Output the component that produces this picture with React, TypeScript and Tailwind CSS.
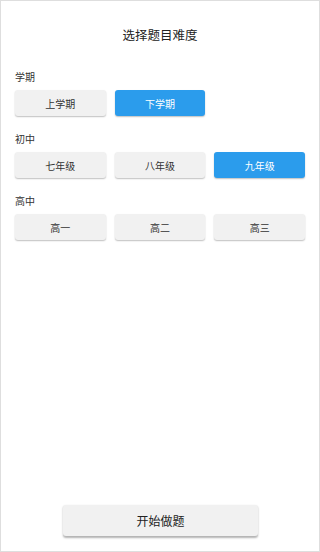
import { useState } from "react"

const font = { fontFamily: '"Noto Sans CJK SC", "Noto Sans", sans-serif' }

function Section({
  label,
  options,
  selected,
  onSelect,
}: {
  label: string
  options: string[]
  selected: string
  onSelect: (v: string) => void
}) {
  return (
    <div className="flex flex-col">
      <div className="text-[10px] leading-[14px] text-[#333]">{label}</div>
      <div className="mt-[6px] grid grid-cols-3 gap-[9px]">
        {options.map((opt) => (
          <button
            key={opt}
            onClick={() => onSelect(opt)}
            className={`h-[26px] rounded-[3px] text-[10px] shadow-[0_1px_1.5px_rgba(0,0,0,0.25)] ${
              selected === opt ? "bg-[#2b9cec] text-white" : "bg-[#f1f1f1] text-[#333]"
            }`}
          >
            {opt}
          </button>
        ))}
      </div>
    </div>
  )
}

export default function App() {
  const [term, setTerm] = useState("下学期")
  const [grade, setGrade] = useState("九年级")

  return (
    <div style={font} className="flex h-[552px] w-[320px] flex-col border border-[#dedede] bg-white px-[14px]">
      <h1 className="pt-[26px] text-center text-[12.5px] leading-[16px] text-[#222]">选择题目难度</h1>

      <div className="mt-[27px] flex flex-col gap-[16px]">
        <Section label="学期" options={["上学期", "下学期"]} selected={term} onSelect={setTerm} />
        <Section label="初中" options={["七年级", "八年级", "九年级"]} selected={grade} onSelect={setGrade} />
        <Section label="高中" options={["高一", "高二", "高三"]} selected={grade} onSelect={setGrade} />
      </div>

      <div className="mt-auto mb-[15px] flex justify-center pl-[1px]">
        <button className="h-[31px] w-[195px] rounded-[3px] bg-[#f1f1f1] text-[12px] text-[#222] shadow-[0_1.5px_2px_rgba(0,0,0,0.3)]">
          开始做题
        </button>
      </div>
    </div>
  )
}
